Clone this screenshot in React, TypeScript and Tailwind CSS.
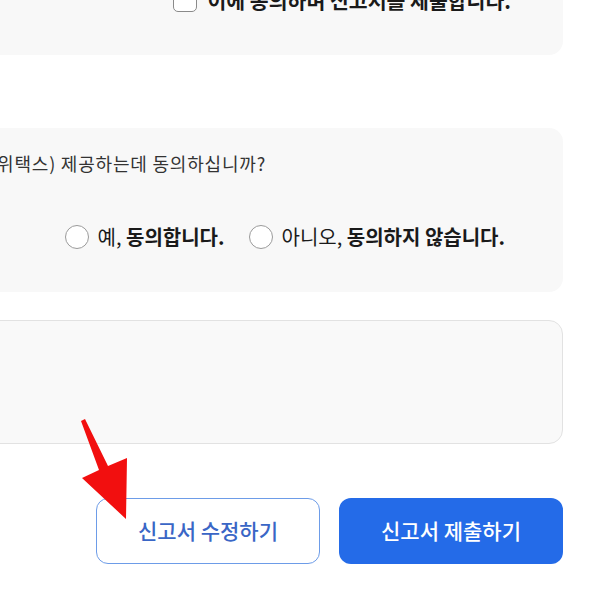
import React from 'react';

/**
 * Lower part of a tax return form: consent card, memo box and the two action buttons.
 */

function Radio({ label, bold }: { label: string; bold: string }) {
  return (
    <label className="flex items-center gap-[9px]">
      <span className="w-[24px] h-[24px] rounded-full border-[1.5px] border-[#9a9a9a] bg-white" />
      <span className="text-[20px] leading-[24px] text-[#1a1a1a]">
        {label} <b className="font-bold">{bold}</b>
      </span>
    </label>
  );
}

export default function App() {
  return (
    <div className="relative w-[600px] h-[600px] overflow-hidden bg-white font-['Noto_Sans_CJK_KR','Noto_Sans',sans-serif]">
      <div className="flex flex-col items-end pr-[37px]">
        {/* Confirm card (top is scrolled out of view) */}
        <div className="-mt-[38px] w-[800px] h-[93px] rounded-[14px] bg-[#f8f8f8] flex justify-end pt-[26px] pr-[52px]">
          <div className="flex items-center gap-[10px] h-[24px]">
            <span className="w-[24px] h-[24px] rounded-[5px] border-[1.5px] border-[#8a8a8a] bg-white" />
            <span className="text-[20.5px] leading-[24px] font-bold text-[#1a1a1a] whitespace-nowrap">
              이에 동의하며 신고서를 제출합니다.
            </span>
          </div>
        </div>

        {/* Consent question */}
        <div className="mt-[73px] w-[800px] h-[164px] rounded-[14px] bg-[#f8f8f8] flex flex-col pt-[23px]">
          <div className="flex justify-end pr-[297px] whitespace-nowrap">
            <span className="text-[18px] leading-[24px] tracking-[0.8px] text-[#333]">
              신고 정보를 지방자치단체(위택스) 제공하는데 동의하십니까?
            </span>
          </div>
          <div className="mt-[50px] flex justify-end gap-[24px] pr-[58px] whitespace-nowrap">
            <Radio label="예," bold="동의합니다." />
            <Radio label="아니오," bold="동의하지 않습니다." />
          </div>
        </div>

        {/* Memo box */}
        <div className="mt-[28px] w-[800px] h-[124px] rounded-[14px] border border-[#e2e2e2] bg-[#f9f9f9]" />

        {/* Actions */}
        <div className="mt-[54px] flex gap-[19px]">
          <button className="w-[224px] h-[66px] rounded-[12px] border-[1.5px] border-[#6d9ce8] bg-white text-[21px] font-medium text-[#3a66c6]">
            신고서 수정하기
          </button>
          <button className="w-[224px] h-[66px] rounded-[12px] bg-[#246be8] text-[21px] font-medium text-white">
            신고서 제출하기
          </button>
        </div>
      </div>

      {/* Red annotation arrow */}
      <svg className="absolute left-0 top-0 pointer-events-none" width="600" height="600">
        <polygon
          points="81,421 85,419 108,466 127,458 126,519 82,478 99,470"
          fill="#f20f0f"
        />
      </svg>
    </div>
  );
}
